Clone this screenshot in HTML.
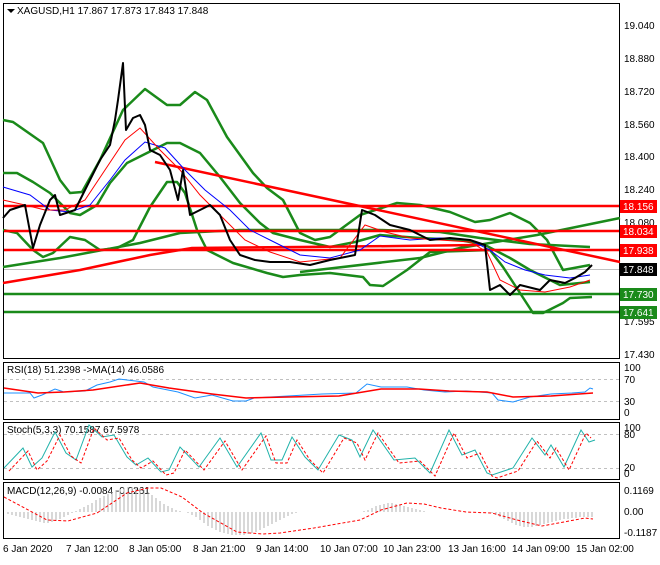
<!DOCTYPE html>
<html><head><style>
body{margin:0;background:#fff;width:660px;height:560px;overflow:hidden;font-family:"Liberation Sans",sans-serif}
svg text{font-family:"Liberation Sans",sans-serif;font-size:10px}
</style></head><body>
<svg width="660" height="560" xmlns="http://www.w3.org/2000/svg">
<g fill="none" stroke="#000" stroke-width="1">
<rect x="3.5" y="3.5" width="616" height="355"/>
<rect x="3.5" y="362.5" width="616" height="57"/>
<rect x="3.5" y="422.5" width="616" height="57"/>
<rect x="3.5" y="482.5" width="616" height="56"/>
</g>
<g fill="#000">
<text x="624" y="29">19.040</text><text x="624" y="62">18.880</text><text x="624" y="95">18.720</text><text x="624" y="128">18.560</text><text x="624" y="160">18.400</text><text x="624" y="193">18.240</text><text x="624" y="226">18.080</text><text x="624" y="325">17.595</text><text x="624" y="358">17.430</text>
<text x="624" y="371">100</text><text x="624" y="383">70</text><text x="624" y="405">30</text><text x="624" y="416">0</text>
<text x="624" y="431">100</text><text x="624" y="438">80</text><text x="624" y="471">20</text><text x="624" y="477">0</text>
<text x="624" y="494">0.1169</text><text x="624" y="515">0.00</text><text x="624" y="536">-0.1187</text>
<text x="3" y="552">6 Jan 2020</text><text x="66" y="552">7 Jan 12:00</text><text x="129" y="552">8 Jan 05:00</text><text x="193" y="552">8 Jan 21:00</text><text x="256" y="552">9 Jan 14:00</text><text x="320" y="552">10 Jan 07:00</text><text x="383" y="552">10 Jan 23:00</text><text x="448" y="552">13 Jan 16:00</text><text x="512" y="552">14 Jan 09:00</text><text x="576" y="552">15 Jan 02:00</text>
<text x="17" y="14">XAGUSD,H1  17.867 17.873 17.843 17.848</text>
<text x="7" y="373">RSI(18) 51.2398  -&gt;MA(14) 46.0586</text>
<text x="7" y="433">Stoch(5,3,3) 70.1587 67.5978</text>
<text x="7" y="494">MACD(12,26,9) -0.0084 -0.0261</text>
</g>
<path d="M7 9l4 4 4-4z" fill="#000"/>
<line x1="4" y1="269.5" x2="619" y2="269.5" stroke="#c0c0c0"/>
<g stroke="#c0c0c0" stroke-dasharray="3,3"><line x1="4" y1="379.5" x2="619" y2="379.5"/><line x1="4" y1="401.5" x2="619" y2="401.5"/><line x1="4" y1="434.5" x2="619" y2="434.5"/><line x1="4" y1="468.5" x2="619" y2="468.5"/></g>
<g fill="none" stroke-width="2.5" stroke-linejoin="round">
<path stroke="#1a8a1a" d="M3 120L13 122L43 143L60 180L70 193L82 192L100 160L123 110L145 89L167 105L180 105L195 92L207 100L227 137L253 173L267 188L283 200L300 233L315 240L330 237L360 215L397 203L420 205L450 212L475 222L490 220L510 213L530 223L547 240L563 270L590 265"/>
<path stroke="#1a8a1a" d="M3 230L17 233L33 250L43 257L53 253L70 237L85 240L100 250L117 248L133 240L150 207L167 182L177 182L185 193L197 230L207 250L233 263L267 273L283 277L300 275L330 273L363 277L370 285L383 286L407 270L430 252L490 250L503 267L520 293L533 313L543 313L563 303L570 298L592 297"/>
<path stroke="#1a8a1a" d="M3 173L17 173L33 182L50 193L70 213L80 215L97 205L110 183L127 163L147 153L167 143L180 143L200 153L220 177L240 203L260 223L273 233L300 240L330 247L355 242L380 235L420 238L460 240L485 245L510 258L530 270L560 285L590 282"/>
<path stroke="#1a8a1a" d="M3 267L60 258L140 243L180 233L240 230L300 230L380 230L440 232L480 238L530 244L590 247"/>
<path stroke="#1a8a1a" d="M300 272L420 258L460 248L537 235L620 218"/>
<path stroke="#f00" d="M3 283L80 270L150 255L192 248L300 247L400 246L480 245"/>
<path stroke="#f00" d="M155 162L620 262"/>
<path stroke="#f00" d="M4 206H619M4 231H619M4 250H619"/>
<path stroke="#1a8a1a" d="M4 294H619M4 312H619"/>
</g>
<path fill="none" stroke="#00f" d="M3 187L30 195L50 210L70 212L90 205L110 180L125 160L145 142L165 148L185 170L205 190L230 210L250 230L270 240L300 255L330 258L360 250L380 236L410 240L440 238L470 240L490 250L505 262L525 270L545 275L570 278L590 275"/>
<path fill="none" stroke="#f00" d="M3 200L25 205L45 210L65 210L85 200L105 170L125 140L140 128L160 150L180 170L200 195L225 220L245 240L270 252L300 262L340 258L365 225L385 232L410 238L440 240L470 242L487 252L500 280L520 290L545 292L570 287L590 280"/>
<path fill="none" stroke="#000" stroke-width="2" stroke-linejoin="round" d="M3 218L10 210L25 205L33 248L40 225L50 200L55 195L60 215L75 210L90 180L100 160L110 145L115 120L118 100L123 63L126 130L133 118L140 115L145 125L150 150L160 155L170 170L178 200L183 170L190 215L200 210L210 205L220 215L230 240L240 255L255 260L270 262L290 262L310 265L330 260L355 255L362 210L375 215L390 225L410 230L430 240L450 238L470 240L485 245L490 290L500 285L510 295L520 285L540 290L550 280L565 283L575 278L585 272L592 265"/>
<rect x="620" y="200" width="37" height="13" fill="#f00"/><rect x="620" y="225" width="37" height="13" fill="#f00"/><rect x="620" y="244" width="37" height="13" fill="#f00"/><rect x="620" y="263" width="37" height="13" fill="#000"/><rect x="620" y="288" width="37" height="13" fill="#1a8a1a"/><rect x="620" y="306" width="37" height="13" fill="#1a8a1a"/>
<g fill="#fff"><text x="623" y="210">18.156</text><text x="623" y="235">18.034</text><text x="623" y="254">17.938</text><text x="623" y="273">17.848</text><text x="623" y="298">17.730</text><text x="623" y="316">17.641</text></g>
<path fill="none" stroke="#1e90ff" d="M4 393L30 393L34 398L42 395L55 389L64 392L85 391L97 385L110 382L119 379L127 380L144 382L153 387L178 392L195 398L212 395L233 401L246 401L254 398L270 397L288 396L322 394L356 393L367 384L381 387L407 387L424 390L445 392L466 391L492 393L498 400L513 402L530 397L551 394L572 393L585 392L590 388L593 389"/>
<path fill="none" stroke="#f00" stroke-width="1.5" d="M4 388L38 393L64 392L93 390L140 383L169 388L212 394L246 398L288 397L339 396L381 389L419 389L449 391L487 392L513 397L551 396L593 393"/>
<path fill="none" stroke="#20b2aa" d="M4 468L23 448L32 467L42 458L55 432L66 453L76 460L89 425L102 437L114 435L127 457L136 465L148 458L161 472L169 470L180 447L199 467L220 438L237 467L261 433L271 460L282 460L292 437L305 457L318 470L339 435L352 440L360 457L373 430L394 460L415 458L430 473L449 430L462 455L475 450L487 473L492 475L513 468L532 438L545 455L551 445L564 467L581 430L589 442L595 440"/>
<path fill="none" stroke="#f00" stroke-dasharray="3,2" transform="translate(5,3)" d="M4 468L23 448L32 467L42 458L55 432L66 453L76 460L89 425L102 437L114 435L127 457L136 465L148 458L161 472L169 470L180 447L199 467L220 438L237 467L261 433L271 460L282 460L292 437L305 457L318 470L339 435L352 440L360 457L373 430L394 460L415 458L430 473L449 430L462 455L475 450L487 473L492 475L513 468L532 438L545 455L551 445L564 467L581 430L586 435"/>
<g stroke="#b0b0b0"><path d="M8 512V514M12 512V515M16 512V516M20 512V517M24 512V518M28 512V519M32 512V520M36 512V521M40 512V522M44 512V523M48 512V523M52 512V522M56 512V521M60 512V519M64 512V517M68 512V515M72 512V513M76 512V511M80 512V509M84 512V507M88 512V505M92 512V503M96 512V500M100 512V498M104 512V496M108 512V494M112 512V492M116 512V490M120 512V489M124 512V488M128 512V487M132 512V487M136 512V487M140 512V488M144 512V490M148 512V492M152 512V495M156 512V498M160 512V501M164 512V504M168 512V506M172 512V508M176 512V510M180 512V511M184 512V512M188 512V513M192 512V515M196 512V517M200 512V520M204 512V523M208 512V526M212 512V528M216 512V530M220 512V532M224 512V533M228 512V534M232 512V535M236 512V535M240 512V535M244 512V535M248 512V534M252 512V533M256 512V532M260 512V530M264 512V528M268 512V526M272 512V524M276 512V522M280 512V520M284 512V518M288 512V516M292 512V514M296 512V513M300 512V512M364 512V511M368 512V510M372 512V508M376 512V506M380 512V505M384 512V504M388 512V503M392 512V503M396 512V504M400 512V505M404 512V506M408 512V507M412 512V508M416 512V509M420 512V510M424 512V511M428 512V512M492 512V513M496 512V515M500 512V517M504 512V519M508 512V521M512 512V523M516 512V525M520 512V526M524 512V527M528 512V527M532 512V527M536 512V526M540 512V525M544 512V524M548 512V523M552 512V522M556 512V521M560 512V520M564 512V519M568 512V519M572 512V518M576 512V518M580 512V517M584 512V517M588 512V517M592 512V517"/></g>
<path fill="none" stroke="#f00" stroke-dasharray="3,2" d="M4 497L47 520L68 521L97 513L127 493L148 488L161 488L182 497L203 513L237 532L263 534L280 533L314 528L360 520L381 510L407 503L424 504L441 508L466 512L492 513L517 520L542 526L564 522L585 518L593 519"/>
</svg>
</body></html>
